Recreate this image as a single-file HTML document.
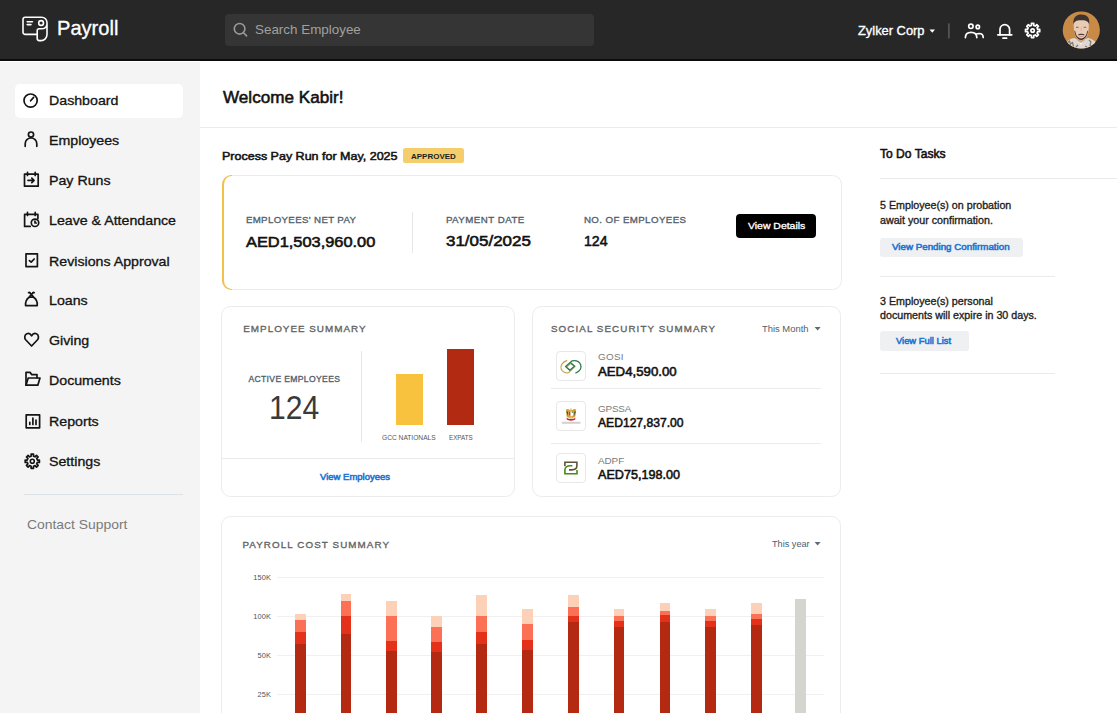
<!DOCTYPE html>
<html><head><meta charset="utf-8">
<style>
*{box-sizing:border-box;margin:0;padding:0}
html,body{width:1117px;height:713px;overflow:hidden;background:#fff;font-family:"Liberation Sans",sans-serif}
.t{position:absolute;white-space:nowrap;line-height:1;transform-origin:0 0}
.a{position:absolute}
svg{position:absolute;overflow:visible}
</style></head><body>
<!-- header -->
<div class="a" style="left:0;top:0;width:1117px;height:59px;background:#272727"></div>
<div class="a" style="left:0;top:59px;width:1117px;height:1.8px;background:#0c0c0c"></div>
<div class="a" style="left:225px;top:14px;width:369px;height:32px;background:#353535;border-radius:4px"></div>
<!-- logo -->
<svg style="left:0;top:0" width="1117" height="60">
  <g fill="none" stroke="#fff" stroke-width="1.6" stroke-linejoin="round" stroke-linecap="round">
    <path d="M37.2 34.4 H25.2 a2.2 2.2 0 0 1 -2.2 -2.2 V19.4 a2.2 2.2 0 0 1 2.2 -2.2 H41.6 a5.4 5.4 0 0 1 5.4 5.4 V34.6 a6 6 0 0 1 -6 6 H39.2 a2 2 0 0 1 -2 -2 V30.8 a2 2 0 0 1 2 -2 H42 a5 5 0 0 0 5 -4.4"/>
    <circle cx="41.1" cy="23" r="2.4"/>
    <path d="M27.2 21.8 H32.4 M27.2 24.6 H31"/>
  </g>
  <!-- search icon -->
  <g fill="none" stroke="#9b9b9b" stroke-width="1.6" stroke-linecap="round">
    <circle cx="239.6" cy="28.8" r="5.3"/>
    <path d="M243.5 32.8 L246.6 35.9"/>
  </g>
  <!-- caret -->
  <path d="M929.5 29.5 H935 L932.25 32.7 Z" fill="#fff"/>
  <rect x="948.3" y="23.4" width="1.2" height="15" fill="#6a6a6a"/>
  <!-- people -->
  <g fill="none" stroke="#fff" stroke-width="1.7" stroke-linecap="round">
    <circle cx="970.9" cy="26.3" r="2.2"/>
    <circle cx="977.8" cy="26.9" r="1.7"/>
    <path d="M965.4 37.6 C965.4 34.3 967.8 32.3 971.1 32.3 C974.4 32.3 976.8 34.3 976.8 37.6"/>
    <path d="M976.2 34 C977.2 33.6 978.2 33.5 979.2 33.5 C981.6 33.6 983.2 35.2 983.2 37.4"/>
  </g>
  <!-- bell -->
  <g fill="none" stroke="#fff" stroke-width="1.7" stroke-linecap="round" stroke-linejoin="round">
    <path d="M1000 34.8 V29.5 a4.8 4.8 0 0 1 9.6 0 V34.8"/>
    <path d="M997.8 34.8 H1011.8"/>
    <path d="M1003 38.2 H1006.6"/>
  </g>
  <!-- gear -->
  <g transform="translate(1032.6,30.5)">
    <path id="gearp" fill="none" stroke="#fff" stroke-width="1.7" stroke-linejoin="round" d="M-1.17 -5.07 L-1.18 -7.10 L1.18 -7.10 L1.17 -5.07 L2.75 -4.41 L4.19 -5.86 L5.86 -4.19 L4.41 -2.75 L5.07 -1.17 L7.10 -1.18 L7.10 1.18 L5.07 1.17 L4.41 2.75 L5.86 4.19 L4.19 5.86 L2.75 4.41 L1.17 5.07 L1.18 7.10 L-1.18 7.10 L-1.17 5.07 L-2.75 4.41 L-4.19 5.86 L-5.86 4.19 L-4.41 2.75 L-5.07 1.17 L-7.10 1.18 L-7.10 -1.18 L-5.07 -1.17 L-4.41 -2.75 L-5.86 -4.19 L-4.19 -5.86 L-2.75 -4.41 Z"/>
    <circle r="1.7" fill="none" stroke="#fff" stroke-width="1.7"/>
  </g>
  <!-- avatar -->
  <defs><clipPath id="av"><circle cx="1081.3" cy="30" r="18.6"/></clipPath></defs>
  <circle cx="1081.3" cy="30" r="19.2" fill="#1c2633"/>
  <g clip-path="url(#av)">
    <rect x="1060" y="9" width="44" height="44" fill="#c98a45"/>
    <path d="M1062 52 C1063 44 1067 39.5 1074 38 L1081 41 L1088 38 C1095 39.5 1099 44 1100 52 Z" fill="#ded8d2"/>
    <path d="M1067 43 l2.5 -2 l1 3 l2 -1.5 l1 4 M1089 40 l2 2 l-1 3 l3 1 M1076 47 l2 -2 M1085 46 l2 1" stroke="#8a7566" stroke-width="1.2" fill="none"/>
    <path d="M1077 37 L1081 45.5 L1085 37 Z" fill="#f4f0ec"/>
    <path d="M1077.5 35 H1084.5 V40.5 L1081 43 L1077.5 40.5 Z" fill="#cfa48c"/>
    <path d="M1073.8 23 C1073.4 30 1074.6 36 1077.2 38.6 C1078.6 39.8 1080 40.2 1081.2 40.2 C1082.5 40.2 1084 39.8 1085.4 38.6 C1088 36 1089.1 30 1088.7 23 C1088.5 19.5 1085 18.2 1081.2 18.2 C1077.4 18.2 1074 19.5 1073.8 23 Z" fill="#e9cbb6"/>
    <path d="M1073.4 24.5 C1072.8 17 1076.5 14.6 1081.4 14.6 C1086.5 14.6 1090.2 17.2 1089.2 24.5 C1088.6 21.6 1086.4 20 1081.2 20.2 C1076.4 20.1 1074.2 21.5 1073.4 24.5 Z" fill="#3d3430"/>
    <path d="M1074.4 30.5 C1074.8 36 1077.6 39.8 1081.2 40 C1084.8 39.8 1087.6 36 1088 30.5 L1087 31.5 C1086.6 35.5 1084.4 38.2 1081.2 38.4 C1078 38.2 1075.8 35.5 1075.4 31.5 Z" fill="#3a2e29"/>
    <path d="M1078 34.4 C1079.5 33.4 1083 33.4 1084.5 34.4 L1084 35.4 C1082.5 34.8 1080 34.8 1078.5 35.4 Z" fill="#4a3a33"/>
    <path d="M1079.2 36.2 Q1081.2 37 1083.2 36.2" stroke="#c58e80" stroke-width="0.9" fill="none"/>
    <rect x="1076" y="26.8" width="2.6" height="1" fill="#7b675c"/>
    <rect x="1083.6" y="26.8" width="2.6" height="1" fill="#7b675c"/>
    <path d="M1081.2 27.5 V31" stroke="#d6b29c" stroke-width="0.9"/>
  </g>
</svg>

<!-- sidebar -->
<div class="a" style="left:0;top:62px;width:200px;height:651px;background:#f4f4f4"></div>
<div class="a" style="left:15px;top:84px;width:168px;height:33.5px;background:#fff;border-radius:5px"></div>
<div class="a" style="left:24.3px;top:494px;width:158.7px;height:1px;background:#dde2e6"></div>
<svg style="left:0;top:0" width="200" height="713">
  <g fill="none" stroke="#141414" stroke-width="1.7" stroke-linecap="round" stroke-linejoin="round">
    <!-- dashboard -->
    <circle cx="30.6" cy="100.6" r="6.6"/>
    <path d="M30.6 100.8 L33.6 97.4"/>
    <!-- employees -->
    <circle cx="31" cy="134.6" r="2.6"/>
    <path d="M25.2 146.3 V143.8 a5.8 5.8 0 0 1 11.6 0 V146.3"/>
    <!-- pay runs -->
    <path d="M24.5 174.2 H38.2 V186.2 H24.5 Z"/>
    <path d="M27.5 172.3 V175.5 M35.2 172.3 V175.5"/>
    <path d="M28 180.4 H34 M31.8 178.2 L34 180.4 L31.8 182.6"/>
    <!-- leave -->
    <path d="M30.2 226.4 H24.6 V214.4 H37.9 V218.6"/>
    <path d="M27.5 212.4 V215.5 M35.2 212.4 V215.5"/>
    <circle cx="35" cy="222.8" r="3.7"/>
    <path d="M35 221.2 V223 H36.2"/>
    <!-- revisions -->
    <path d="M26 253.8 H37.4 V266.6 H26 Z"/>
    <path d="M29.4 260.6 L31.2 262.2 L34.2 259"/>
    <!-- loans -->
    <path d="M29.2 297.2 C26 299.5 25.2 302.6 25.6 305.6 H37.2 C37.6 302.6 36.8 299.5 33.6 297.2 Z"/>
    <path d="M29.6 296.6 L33.4 292.4 M33.2 296.6 L29.4 292.4 M28.6 292.6 H30 M32.8 292.6 H34.2"/>
    <!-- giving -->
    <path d="M31.6 346 L25.9 340 C24.1 338 24.4 334.8 26.9 333.8 C28.9 333 30.6 334 31.6 335.8 C32.6 334 34.4 333 36.4 333.8 C38.8 334.8 39.1 338 37.3 340 Z"/>
    <!-- documents -->
    <path d="M26 385.2 V372.4 H30 L31.8 374.6 H37 V377.8"/>
    <path d="M26 385.2 L28.2 378 H40 L37.8 385.2 Z"/>
    <!-- reports -->
    <path d="M26.2 414.8 H39.6 V427.8 H26.2 Z"/>
    <path d="M29.8 424.4 V422.4 M32.9 424.4 V418.2 M36 424.4 V420"/>
  </g>
  <!-- settings gear -->
  <g transform="translate(32.3,461.2)">
    <path fill="none" stroke="#141414" stroke-width="1.7" stroke-linejoin="round" d="M-1.17 -5.07 L-1.18 -7.10 L1.18 -7.10 L1.17 -5.07 L2.75 -4.41 L4.19 -5.86 L5.86 -4.19 L4.41 -2.75 L5.07 -1.17 L7.10 -1.18 L7.10 1.18 L5.07 1.17 L4.41 2.75 L5.86 4.19 L4.19 5.86 L2.75 4.41 L1.17 5.07 L1.18 7.10 L-1.18 7.10 L-1.17 5.07 L-2.75 4.41 L-4.19 5.86 L-5.86 4.19 L-4.41 2.75 L-5.07 1.17 L-7.10 1.18 L-7.10 -1.18 L-5.07 -1.17 L-4.41 -2.75 L-5.86 -4.19 L-4.19 -5.86 L-2.75 -4.41 Z"/>
    <circle r="2" fill="none" stroke="#141414" stroke-width="1.6"/>
  </g>
</svg>

<!-- main -->
<div class="a" style="left:200px;top:127px;width:917px;height:1px;background:#ececec"></div>
<div class="a" style="left:403px;top:148px;width:60.6px;height:15.2px;background:#f4cd6d;border-radius:2.5px"></div>
<!-- pay run card -->
<div class="a" style="left:221.9px;top:174.5px;width:620.1px;height:115.3px;border:1px solid #eaecee;border-radius:9.5px"></div>
<div class="a" style="left:221.9px;top:174.5px;width:10px;height:115.3px;overflow:hidden"><div class="a" style="left:0;top:0;width:620.1px;height:115.3px;border:1px solid #f2c14a;border-left:2.6px solid #f2c14a;border-radius:9.5px"></div></div>
<div class="a" style="left:412px;top:212px;width:1px;height:41px;background:#e6e6e6"></div>
<div class="a" style="left:736px;top:213.7px;width:80px;height:24.3px;background:#000;border-radius:4px"></div>
<!-- to do -->
<div class="a" style="left:880px;top:178px;width:237px;height:1px;background:#ebebeb"></div>
<div class="a" style="left:880px;top:237.5px;width:143px;height:19.7px;background:#eef0f2;border-radius:3px"></div>
<div class="a" style="left:880px;top:275.5px;width:175px;height:1px;background:#ebebeb"></div>
<div class="a" style="left:880px;top:331.2px;width:89px;height:19.7px;background:#eef0f2;border-radius:3px"></div>
<div class="a" style="left:880px;top:372.8px;width:175px;height:1px;background:#ebebeb"></div>
<!-- employee summary -->
<div class="a" style="left:221px;top:306px;width:294px;height:191px;border:1px solid #eaecee;border-radius:9.5px"></div>
<div class="a" style="left:222px;top:457.6px;width:292px;height:1px;background:#ebebeb"></div>
<div class="a" style="left:360.5px;top:351px;width:1px;height:91.3px;background:#e6e6e6"></div>
<div class="a" style="left:396px;top:374.3px;width:26.6px;height:50.5px;background:#f8c23f"></div>
<div class="a" style="left:447.3px;top:349.1px;width:26.7px;height:75.7px;background:#b32a12"></div>
<!-- social security -->
<div class="a" style="left:532px;top:306px;width:309px;height:191px;border:1px solid #eaecee;border-radius:9.5px"></div>
<svg style="left:0;top:0" width="1117" height="713">
  <path d="M814.6 327 H820.6 L817.6 330.4 Z" fill="#5d6c78"/>
  <path d="M814.6 542 H820.6 L817.6 545.4 Z" fill="#5d6c78"/>
</svg>
<div class="a" style="left:551px;top:388.3px;width:270px;height:1px;background:#ebebeb"></div>
<div class="a" style="left:551px;top:443.3px;width:270px;height:1px;background:#ebebeb"></div>
<div class="a" style="left:556px;top:351px;width:30px;height:30px;border:1px solid #e8e8e8;border-radius:4px;background:#fff"></div>
<div class="a" style="left:556px;top:400.5px;width:30px;height:30px;border:1px solid #e8e8e8;border-radius:4px;background:#fff"></div>
<div class="a" style="left:556px;top:453.2px;width:30px;height:30px;border:1px solid #e8e8e8;border-radius:4px;background:#fff"></div>
<svg style="left:0;top:0" width="1117" height="713">
  <!-- GOSI -->
  <path d="M567.2 360.4 C562.4 362 560 365.6 561.2 369 C562.3 371.8 565.6 373.2 568.6 372.6 L575.2 366.4 L571.2 362.9 L566.4 367 L569.8 370" fill="none" stroke="#c3a456" stroke-width="1.3" stroke-linejoin="round"/>
  <path d="M575.4 373.2 C580.2 371.4 581.8 367.8 580.6 364.6 C579.4 361.8 576 360.2 572.2 360.8 L565.6 366.6 L569.8 370.2 L574.4 366.2 L571 363.2" fill="none" stroke="#2a7d4c" stroke-width="1.3" stroke-linejoin="round"/>
  <!-- GPSSA emblem -->
  <path d="M566 409.5 C567.5 408.5 569 409 570.2 410.5 L571 407.6 L571.8 410.5 C573 409 574.6 408.5 576.2 409.5 L575.4 416.5 C574 418 572.5 418.4 571 418.5 C569.5 418.4 568 418 566.6 416.5 Z" fill="#cfa631"/>
  <path d="M566.2 411.5 L568 411.5 L567.8 416 Z M575.9 411.5 L574.2 411.5 L574.4 416 Z" fill="#5a4a2a"/>
  <path d="M568.8 411.4 H573.2 V414.4 C573.2 415.6 572.2 416.2 571 416.2 C569.8 416.2 568.8 415.6 568.8 414.4 Z" fill="#fff"/>
  <path d="M568.8 411.4 H570.4 V416 C569.6 415.8 568.8 415.3 568.8 414.4 Z" fill="#d23a2e"/>
  <path d="M571.8 411.4 H573.2 V412.8 H571.8 Z" fill="#3d8d45"/>
  <path d="M566.6 417.4 C568.5 419.6 573.5 419.6 575.4 417.4 L575.2 419.6 C573.5 421 568.5 421 566.8 419.6 Z" fill="#d0202a"/>
  <path d="M567.6 417.3 C569.5 418.2 572.5 418.2 574.4 417.3" stroke="#cfd3d6" stroke-width="0.8" fill="none"/>
  <rect x="561.8" y="421.8" width="18.6" height="2" fill="#c9c4c4" opacity="0.8"/>
  <!-- ADPF -->
  <path d="M564.9 466.2 V462.3 H576.9 V465.8 C576.9 468.6 574.6 469.9 571.6 469.9 H569" fill="none" stroke="#5f5236" stroke-width="1.6"/>
  <path d="M577 470 V473.8 H564.9 V470 C564.9 467.4 567.2 465.7 570.2 465.7 H572.4" fill="none" stroke="#4a8a18" stroke-width="1.6"/>
  </svg>
<!-- payroll cost -->
<div class="a" style="left:221px;top:516px;width:620px;height:230px;border:1px solid #eaecee;border-radius:9.5px"></div>
<div class="a" style="left:277.4px;top:577px;width:547px;height:1px;background:#f0f0f0"></div>
<div class="a" style="left:277.4px;top:616px;width:547px;height:1px;background:#f0f0f0"></div>
<div class="a" style="left:277.4px;top:655px;width:547px;height:1px;background:#f0f0f0"></div>
<div class="a" style="left:277.4px;top:694px;width:547px;height:1px;background:#f0f0f0"></div>
<div class='a' style='left:295.3px;top:613.5px;width:10.6px;height:99.5px;background:#fdd0b8'></div>
<div class='a' style='left:295.3px;top:620.4px;width:10.6px;height:92.6px;background:#fc7056'></div>
<div class='a' style='left:295.3px;top:632.0px;width:10.6px;height:81.0px;background:#e4321a'></div>
<div class='a' style='left:295.3px;top:644.3px;width:10.6px;height:68.7px;background:#b32912'></div>
<div class='a' style='left:340.8px;top:593.7px;width:10.6px;height:119.3px;background:#fdd0b8'></div>
<div class='a' style='left:340.8px;top:600.9px;width:10.6px;height:112.1px;background:#fc7056'></div>
<div class='a' style='left:340.8px;top:615.5px;width:10.6px;height:97.5px;background:#e4321a'></div>
<div class='a' style='left:340.8px;top:633.5px;width:10.6px;height:79.5px;background:#b32912'></div>
<div class='a' style='left:386.0px;top:600.9px;width:10.6px;height:112.1px;background:#fdd0b8'></div>
<div class='a' style='left:386.0px;top:616.0px;width:10.6px;height:97.0px;background:#fc7056'></div>
<div class='a' style='left:386.0px;top:641.0px;width:10.6px;height:72.0px;background:#e4321a'></div>
<div class='a' style='left:386.0px;top:651.2px;width:10.6px;height:61.8px;background:#b32912'></div>
<div class='a' style='left:431.3px;top:615.7px;width:10.6px;height:97.3px;background:#fdd0b8'></div>
<div class='a' style='left:431.3px;top:626.9px;width:10.6px;height:86.1px;background:#fc7056'></div>
<div class='a' style='left:431.3px;top:641.8px;width:10.6px;height:71.2px;background:#e4321a'></div>
<div class='a' style='left:431.3px;top:652.4px;width:10.6px;height:60.6px;background:#b32912'></div>
<div class='a' style='left:476.3px;top:595.1px;width:10.6px;height:117.9px;background:#fdd0b8'></div>
<div class='a' style='left:476.3px;top:615.7px;width:10.6px;height:97.3px;background:#fc7056'></div>
<div class='a' style='left:476.3px;top:632.0px;width:10.6px;height:81.0px;background:#e4321a'></div>
<div class='a' style='left:476.3px;top:643.8px;width:10.6px;height:69.2px;background:#b32912'></div>
<div class='a' style='left:522.2px;top:608.9px;width:10.6px;height:104.1px;background:#fdd0b8'></div>
<div class='a' style='left:522.2px;top:624.0px;width:10.6px;height:89.0px;background:#fc7056'></div>
<div class='a' style='left:522.2px;top:639.5px;width:10.6px;height:73.5px;background:#e4321a'></div>
<div class='a' style='left:522.2px;top:649.8px;width:10.6px;height:63.2px;background:#b32912'></div>
<div class='a' style='left:568.1px;top:595.1px;width:10.6px;height:117.9px;background:#fdd0b8'></div>
<div class='a' style='left:568.1px;top:606.6px;width:10.6px;height:106.4px;background:#fc7056'></div>
<div class='a' style='left:568.1px;top:616.0px;width:10.6px;height:97.0px;background:#e4321a'></div>
<div class='a' style='left:568.1px;top:622.3px;width:10.6px;height:90.7px;background:#b32912'></div>
<div class='a' style='left:613.7px;top:608.9px;width:10.6px;height:104.1px;background:#fdd0b8'></div>
<div class='a' style='left:613.7px;top:616.0px;width:10.6px;height:97.0px;background:#fc7056'></div>
<div class='a' style='left:613.7px;top:620.9px;width:10.6px;height:92.1px;background:#e4321a'></div>
<div class='a' style='left:613.7px;top:626.9px;width:10.6px;height:86.1px;background:#b32912'></div>
<div class='a' style='left:659.5px;top:603.1px;width:10.6px;height:109.9px;background:#fdd0b8'></div>
<div class='a' style='left:659.5px;top:610.9px;width:10.6px;height:102.1px;background:#fc7056'></div>
<div class='a' style='left:659.5px;top:615.4px;width:10.6px;height:97.6px;background:#e4321a'></div>
<div class='a' style='left:659.5px;top:622.3px;width:10.6px;height:90.7px;background:#b32912'></div>
<div class='a' style='left:705.4px;top:608.9px;width:10.6px;height:104.1px;background:#fdd0b8'></div>
<div class='a' style='left:705.4px;top:616.0px;width:10.6px;height:97.0px;background:#fc7056'></div>
<div class='a' style='left:705.4px;top:620.9px;width:10.6px;height:92.1px;background:#e4321a'></div>
<div class='a' style='left:705.4px;top:626.9px;width:10.6px;height:86.1px;background:#b32912'></div>
<div class='a' style='left:751.2px;top:603.1px;width:10.6px;height:109.9px;background:#fdd0b8'></div>
<div class='a' style='left:751.2px;top:613.7px;width:10.6px;height:99.3px;background:#fc7056'></div>
<div class='a' style='left:751.2px;top:618.9px;width:10.6px;height:94.1px;background:#e4321a'></div>
<div class='a' style='left:751.2px;top:625.2px;width:10.6px;height:87.8px;background:#b32912'></div>
<div class='a' style='left:795px;top:599.4px;width:10.5px;height:113.6px;background:#d4d5cf'></div>
<div class='t' style='top:17.82px;font-size:20.30px;font-weight:400;color:#fff;-webkit-text-stroke:0.33px #fff;left:57.10px;transform:scaleX(0.9903);'>Payroll</div>
<div class='t' style='top:23.34px;font-size:13.30px;font-weight:400;color:#a0a0a0;left:254.80px;transform:scaleX(1.0079);'>Search Employee</div>
<div class='t' style='top:25.39px;font-size:12.30px;font-weight:400;color:#fff;-webkit-text-stroke:0.33px #fff;left:858.30px;transform:scaleX(1.0465);'>Zylker Corp</div>
<div class='t' style='top:94.39px;font-size:13.60px;font-weight:400;color:#141414;-webkit-text-stroke:0.33px #141414;left:48.60px;transform:scaleX(1.0437);'>Dashboard</div>
<div class='t' style='top:134.39px;font-size:13.60px;font-weight:400;color:#141414;-webkit-text-stroke:0.33px #141414;left:48.60px;transform:scaleX(1.0437);'>Employees</div>
<div class='t' style='top:173.69px;font-size:13.60px;font-weight:400;color:#141414;-webkit-text-stroke:0.33px #141414;left:48.60px;transform:scaleX(1.0437);'>Pay Runs</div>
<div class='t' style='top:213.69px;font-size:13.60px;font-weight:400;color:#141414;-webkit-text-stroke:0.33px #141414;left:48.60px;transform:scaleX(1.0437);'>Leave &amp; Attendance</div>
<div class='t' style='top:255.09px;font-size:13.60px;font-weight:400;color:#141414;-webkit-text-stroke:0.33px #141414;left:48.60px;transform:scaleX(1.0437);'>Revisions Approval</div>
<div class='t' style='top:294.39px;font-size:13.60px;font-weight:400;color:#141414;-webkit-text-stroke:0.33px #141414;left:48.60px;transform:scaleX(1.0437);'>Loans</div>
<div class='t' style='top:334.09px;font-size:13.60px;font-weight:400;color:#141414;-webkit-text-stroke:0.33px #141414;left:48.60px;transform:scaleX(1.0437);'>Giving</div>
<div class='t' style='top:374.19px;font-size:13.60px;font-weight:400;color:#141414;-webkit-text-stroke:0.33px #141414;left:48.60px;transform:scaleX(1.0437);'>Documents</div>
<div class='t' style='top:415.49px;font-size:13.60px;font-weight:400;color:#141414;-webkit-text-stroke:0.33px #141414;left:48.60px;transform:scaleX(1.0437);'>Reports</div>
<div class='t' style='top:455.49px;font-size:13.60px;font-weight:400;color:#141414;-webkit-text-stroke:0.33px #141414;left:48.60px;transform:scaleX(1.0437);'>Settings</div>
<div class='t' style='top:518.03px;font-size:13.20px;font-weight:400;color:#7a7a7a;left:27.00px;transform:scaleX(1.0544);'>Contact Support</div>
<div class='t' style='top:90.25px;font-size:16.60px;font-weight:400;color:#111;-webkit-text-stroke:0.55px #111;left:222.50px;transform:scaleX(1.0307);'>Welcome Kabir!</div>
<div class='t' style='top:150.08px;font-size:11.60px;font-weight:400;color:#141414;-webkit-text-stroke:0.55px #141414;left:222.30px;transform:scaleX(1.0778);'>Process Pay Run for May, 2025</div>
<div class='t' style='top:153.31px;font-size:7.90px;font-weight:700;color:#1e1e1e;left:411.00px;transform:scaleX(1.0114);'>APPROVED</div>
<div class='t' style='top:215.49px;font-size:9.70px;font-weight:400;color:#52606c;letter-spacing:0.351px;-webkit-text-stroke:0.33px #52606c;left:245.90px;'>EMPLOYEES' NET PAY</div>
<div class='t' style='top:235.18px;font-size:14.20px;font-weight:400;color:#111;-webkit-text-stroke:0.55px #111;left:246.00px;transform:scaleX(1.1543);'>AED1,503,960.00</div>
<div class='t' style='top:215.49px;font-size:9.70px;font-weight:400;color:#52606c;letter-spacing:0.488px;-webkit-text-stroke:0.33px #52606c;left:445.90px;'>PAYMENT DATE</div>
<div class='t' style='top:233.71px;font-size:14.40px;font-weight:400;color:#111;-webkit-text-stroke:0.55px #111;left:446.40px;transform:scaleX(1.1787);'>31/05/2025</div>
<div class='t' style='top:215.49px;font-size:9.70px;font-weight:400;color:#52606c;letter-spacing:0.418px;-webkit-text-stroke:0.33px #52606c;left:583.90px;'>NO. OF EMPLOYEES</div>
<div class='t' style='top:233.81px;font-size:14.40px;font-weight:400;color:#111;-webkit-text-stroke:0.55px #111;left:583.90px;transform:scaleX(0.9827);'>124</div>
<div class='t' style='top:221.34px;font-size:9.40px;font-weight:400;color:#fff;-webkit-text-stroke:0.33px #fff;left:747.50px;transform:scaleX(1.1143);'>View Details</div>
<div class='t' style='top:148.27px;font-size:12.20px;font-weight:400;color:#111;-webkit-text-stroke:0.55px #111;left:880.20px;transform:scaleX(0.9916);'>To Do Tasks</div>
<div class='t' style='top:200.73px;font-size:10.00px;font-weight:400;color:#1e1e1e;-webkit-text-stroke:0.33px #1e1e1e;left:879.80px;transform:scaleX(1.0687);'>5 Employee(s) on probation</div>
<div class='t' style='top:216.13px;font-size:10.00px;font-weight:400;color:#1e1e1e;-webkit-text-stroke:0.33px #1e1e1e;left:879.80px;transform:scaleX(1.0687);'>await your confirmation.</div>
<div class='t' style='top:242.78px;font-size:9.00px;font-weight:400;color:#1f75d2;-webkit-text-stroke:0.55px #1f75d2;left:892.20px;transform:scaleX(1.0848);'>View Pending Confirmation</div>
<div class='t' style='top:297.24px;font-size:10.00px;font-weight:400;color:#1e1e1e;-webkit-text-stroke:0.33px #1e1e1e;left:879.80px;transform:scaleX(1.0687);'>3 Employee(s) personal</div>
<div class='t' style='top:310.64px;font-size:10.00px;font-weight:400;color:#1e1e1e;-webkit-text-stroke:0.33px #1e1e1e;left:879.80px;transform:scaleX(1.0687);'>documents will expire in 30 days.</div>
<div class='t' style='top:337.48px;font-size:9.00px;font-weight:400;color:#1f75d2;-webkit-text-stroke:0.55px #1f75d2;left:896.30px;transform:scaleX(1.0405);'>View Full List</div>
<div class='t' style='top:323.92px;font-size:9.90px;font-weight:400;color:#626262;letter-spacing:0.988px;-webkit-text-stroke:0.33px #626262;left:243.30px;'>EMPLOYEE SUMMARY</div>
<div class='t' style='top:375.02px;font-size:8.60px;font-weight:400;color:#52606c;letter-spacing:0.343px;-webkit-text-stroke:0.33px #52606c;left:248.40px;'>ACTIVE EMPLOYEES</div>
<div class='t' style='top:390.50px;font-size:33.90px;font-weight:400;color:#3a3a3a;left:268.60px;transform:scaleX(0.8878);'>124</div>
<div class='t' style='top:434.79px;font-size:7.10px;font-weight:400;color:#555;left:382.40px;transform:scaleX(0.9352);'>GCC NATIONALS</div>
<div class='t' style='top:434.79px;font-size:7.10px;font-weight:400;color:#555;left:448.90px;transform:scaleX(0.8798);'>EXPATS</div>
<div class='t' style='top:472.97px;font-size:8.90px;font-weight:400;color:#1f75d2;-webkit-text-stroke:0.55px #1f75d2;left:319.90px;transform:scaleX(1.0710);'>View Employees</div>
<div class='t' style='top:323.60px;font-size:9.80px;font-weight:400;color:#626262;letter-spacing:1.083px;-webkit-text-stroke:0.33px #626262;left:551.00px;'>SOCIAL SECURITY SUMMARY</div>
<div class='t' style='top:323.57px;font-size:9.60px;font-weight:400;color:#52606c;left:762.30px;transform:scaleX(0.9796);'>This Month</div>
<div class='t' style='top:352.12px;font-size:9.90px;font-weight:400;color:#7a7a7a;letter-spacing:0.266px;left:598.00px;'>GOSI</div>
<div class='t' style='top:366.39px;font-size:12.30px;font-weight:400;color:#111;-webkit-text-stroke:0.55px #111;left:598.40px;transform:scaleX(1.0744);'>AED4,590.00</div>
<div class='t' style='top:403.82px;font-size:9.90px;font-weight:400;color:#7a7a7a;letter-spacing:-0.183px;left:598.00px;'>GPSSA</div>
<div class='t' style='top:416.59px;font-size:12.30px;font-weight:400;color:#111;-webkit-text-stroke:0.55px #111;left:598.40px;transform:scaleX(0.9845);'>AED127,837.00</div>
<div class='t' style='top:455.82px;font-size:9.90px;font-weight:400;color:#7a7a7a;letter-spacing:-0.048px;left:598.00px;'>ADPF</div>
<div class='t' style='top:468.59px;font-size:12.30px;font-weight:400;color:#111;-webkit-text-stroke:0.55px #111;left:598.40px;transform:scaleX(1.0238);'>AED75,198.00</div>
<div class='t' style='top:539.60px;font-size:9.80px;font-weight:400;color:#626262;letter-spacing:1.097px;-webkit-text-stroke:0.33px #626262;left:242.40px;'>PAYROLL COST SUMMARY</div>
<div class='t' style='top:538.57px;font-size:9.60px;font-weight:400;color:#52606c;left:771.70px;transform:scaleX(0.9530);'>This year</div>
<div class='t' style='top:573.74px;font-size:7.40px;font-weight:400;color:#4a5560;letter-spacing:0.150px;right:846.00px;'>150K</div>
<div class='t' style='top:612.54px;font-size:7.40px;font-weight:400;color:#4a5560;letter-spacing:0.150px;right:846.00px;'>100K</div>
<div class='t' style='top:651.54px;font-size:7.40px;font-weight:400;color:#4a5560;letter-spacing:0.150px;right:846.00px;'>50K</div>
<div class='t' style='top:690.64px;font-size:7.40px;font-weight:400;color:#4a5560;letter-spacing:0.150px;right:846.00px;'>25K</div>
</body></html>
